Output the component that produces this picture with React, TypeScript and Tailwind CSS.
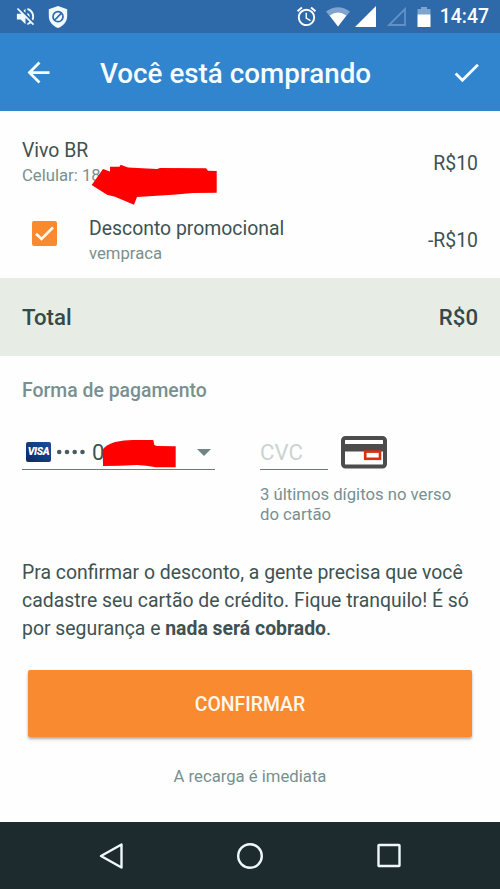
import React, { useState } from "react";
import { MdAlarm, MdArrowBack, MdCheck, MdVolumeOff } from "react-icons/md";

function StatusBar() {
  return (
    <div className="flex h-[33px] items-center justify-between bg-[#2e69a9] pl-[14px] pr-[11px] text-white">
      <div className="flex items-center gap-[11px]">
        <MdVolumeOff className="size-[23px] text-[#f0fcff]" />
        <svg width="20" height="22" viewBox="0 0 20 22">
          <path
            d="M10 0 L19.2 3.2 V10 C19.2 15.5 15.5 20 10 22 C4.5 20 .8 15.5 .8 10 V3.2 Z"
            fill="#f0fcff"
          />
          <circle cx="10" cy="10.7" r="5" fill="none" stroke="#2e69a9" strokeWidth="1.7" />
          <path d="M6.8 14 L13.2 7.4" stroke="#2e69a9" strokeWidth="1.7" />
        </svg>
      </div>
      <div className="flex items-center">
        <MdAlarm className="size-[23px]" />
        <svg className="ml-[8px]" width="24" height="20" viewBox="0 0 24 20">
          <path d="M0 4.6 Q12 -4 24 4.6 L12 19.5 Z" fill="#7fa5cf" />
          <path d="M3.7 8.6 Q12 2.6 20.3 8.6 L12 19.5 Z" fill="#fff" />
        </svg>
        <svg className="ml-[5px]" width="22" height="21" viewBox="0 0 22 21">
          <path d="M21 0 V21 H0 Z" fill="#fff" />
        </svg>
        <svg className="ml-[9px]" width="21" height="21" viewBox="0 0 21 21">
          <path d="M19 3 V19 H3 Z" fill="none" stroke="#6391c4" strokeWidth="1.8" />
        </svg>
        <svg className="ml-[10px]" width="14" height="20" viewBox="0 0 14 20">
          <path d="M4 0 H10 V2 H13.5 V8 H.5 V2 H4 Z" fill="#7fa5cf" />
          <path d="M.5 7.5 H13.5 V20 H.5 Z" fill="#fff" />
        </svg>
        <span className="ml-[9px] pt-px text-[19.4px] font-medium leading-[32px]">14:47</span>
      </div>
    </div>
  );
}

function VisaBadge() {
  return (
    <span className="flex h-5 w-[25px] items-center justify-center rounded-[2px] bg-linear-to-tr from-[#0b2a66] to-[#1d4d9c] text-[10.5px] font-black italic leading-none tracking-[-0.4px] text-white">
      VISA
    </span>
  );
}

function CardBackIcon() {
  return (
    <svg width="46" height="33" viewBox="0 0 46 33">
      <rect x="2" y="2" width="42" height="28.5" rx="2.5" fill="#fff" stroke="#4c4c4c" strokeWidth="4" />
      <rect x="2" y="8" width="42" height="7.5" fill="#4c4c4c" />
      <rect x="24.2" y="15.6" width="14.8" height="7.2" fill="#fff" stroke="#d8310f" strokeWidth="2.6" />
    </svg>
  );
}

export default function App() {
  const [applied, setApplied] = useState(true);

  return (
    <div className="flex h-[889px] w-[500px] flex-col overflow-hidden bg-[#fefefe] font-[Roboto,sans-serif] text-[#3f5252]">
      <StatusBar />
      <header className="flex h-[78px] items-center bg-[#3184ce] pl-[22px] pr-[17px] text-[#f5fdff]">
        <MdArrowBack className="size-[33px]" />
        <h1 className="ml-[45px] flex-1 pt-[4px] text-[27.8px] font-medium leading-[36px]">
          Você está comprando
        </h1>
        <MdCheck className="size-[33px]" />
      </header>

      <section className="flex h-[167px] flex-col gap-[25px] px-[22px] pt-[26px]">
        <div className="flex h-[53px] justify-between">
          <div className="relative">
            <p className="text-[19.4px] leading-[28px]">Vivo BR</p>
            <p className="text-[16.7px] leading-[22px] text-[#7b8f8f]">Celular: 18</p>
            <svg className="absolute left-[69px] top-[27px]" width="127" height="42" viewBox="91 164 127 42">
              <path
                d="M91.7 185 L103 169 L110 171.5 V166.7 L119.5 166.7 L120.7 164.7 L128 167.5 L157 169 L160 168 L206 168.3 L208 170.7 L216.7 171 V192.7 L193 193 L173 194.7 L137 197 L134 204.7 L115 196.7 L107 194.7 Z"
                fill="#f00"
              />
            </svg>
          </div>
          <span className="text-[19.4px] leading-[53px]">R$10</span>
        </div>
        <div className="flex h-[52px] justify-between">
          <div className="flex">
            <button
              onClick={() => setApplied(!applied)}
              className="ml-[10px] mt-[6px] flex size-[25px] items-center justify-center rounded-[2px] bg-[#fa8a30] text-[#fff8ee]"
            >
              {applied && (
                <svg width="19" height="15" viewBox="0 0 19 15">
                  <path d="M1 7.7 L6.5 13 L18 1.5" fill="none" stroke="currentColor" strokeWidth="2.6" />
                </svg>
              )}
            </button>
            <div className="ml-[32px]">
              <p className="text-[19.4px] leading-[28px]">Desconto promocional</p>
              <p className="text-[16.7px] leading-[22px] text-[#7b8f8f]">vempraca</p>
            </div>
          </div>
          <span className="text-[19.4px] leading-[52px]">-R$10</span>
        </div>
      </section>

      <section className="flex h-[78px] items-center justify-between bg-[#e7ede5] px-[22px] pt-[2px] text-[22.2px] font-medium text-[#34494a]">
        <span>Total</span>
        <span>R$0</span>
      </section>

      <section className="px-[22px] pt-[21px]">
        <h2 className="text-[19.4px] font-medium leading-[28px] text-[#789090]">
          Forma de pagamento
        </h2>
        <div className="mt-[30px] flex items-start">
          <div className="relative flex h-[35px] w-[193px] items-center border-b border-[#6c7c7c] pl-[4px]">
            <VisaBadge />
            <svg className="ml-[5px]" width="30" height="6" viewBox="0 0 30 6" fill="#4a5c5d">
              <circle cx="3.2" cy="3" r="2.3" />
              <circle cx="11" cy="3" r="2.3" />
              <circle cx="18.7" cy="3" r="2.3" />
              <circle cx="26.5" cy="3" r="2.3" />
            </svg>
            <span className="ml-[6px] pt-[2px] text-[22.2px]">0</span>
            <svg className="absolute left-[80px] top-[4px]" width="75" height="29" viewBox="102 439 75 29">
              <path
                d="M102.7 450 Q105 445 115 442 Q124 440 133 440 H153.3 L154.3 445 L157 446 L175.7 446.3 V467.3 H156 Q146 465.5 137 465 Q120 466 103 466 Z"
                fill="#f00"
              />
            </svg>
            <svg className="ml-auto mr-[4px]" width="14" height="7" viewBox="0 0 14 7">
              <path d="M0 0 H14 L7 7 Z" fill="#718484" />
            </svg>
          </div>
          <div className="ml-[45px]">
            <div className="flex">
              <div className="flex h-[35px] w-[68px] items-center border-b border-[#6c7c7c] pt-[2px] text-[22.2px] text-[#ccd3d3]">
                CVC
              </div>
              <div className="ml-[13px] mt-[1px]">
                <CardBackIcon />
              </div>
            </div>
            <p className="mt-[15px] w-[210px] text-[16.7px] leading-[19.5px] text-[#789090]">
              3 últimos dígitos no verso do cartão
            </p>
          </div>
        </div>
        <p className="mt-[35px] whitespace-nowrap text-[19.4px] leading-[28px]">
          Pra confirmar o desconto, a gente precisa que você
          <br />
          cadastre seu cartão de crédito. Fique tranquilo! É só
          <br />
          por segurança e <b className="font-bold">nada será cobrado</b>.
        </p>
      </section>

      <button className="mx-[28px] mt-[27px] h-[67px] rounded-[2px] bg-[#fa8a30] pt-[2px] text-[19.4px] font-medium text-[#fff8ee] shadow-[0_2px_3px_rgba(60,75,95,0.45)]">
        CONFIRMAR
      </button>
      <p className="mt-[29px] text-center text-[16.7px] leading-[22px] text-[#789090]">
        A recarga é imediata
      </p>

      <nav className="mt-auto flex h-[67px] items-center justify-center gap-[112px] bg-[#1d2b2f]">
        <svg width="26" height="28" viewBox="0 0 26 28" fill="none" stroke="#eef8fa" strokeWidth="2.4">
          <path d="M23.5 2.5 V25.5 L3 14 Z" strokeLinejoin="round" />
        </svg>
        <svg width="28" height="28" viewBox="0 0 28 28" fill="none" stroke="#eef8fa" strokeWidth="2.4">
          <circle cx="14" cy="14" r="11.8" />
        </svg>
        <svg width="26" height="28" viewBox="0 0 26 28" fill="none" stroke="#eef8fa" strokeWidth="2.4">
          <rect x="2.5" y="3" width="21" height="21" rx="0.5" />
        </svg>
      </nav>
    </div>
  );
}
